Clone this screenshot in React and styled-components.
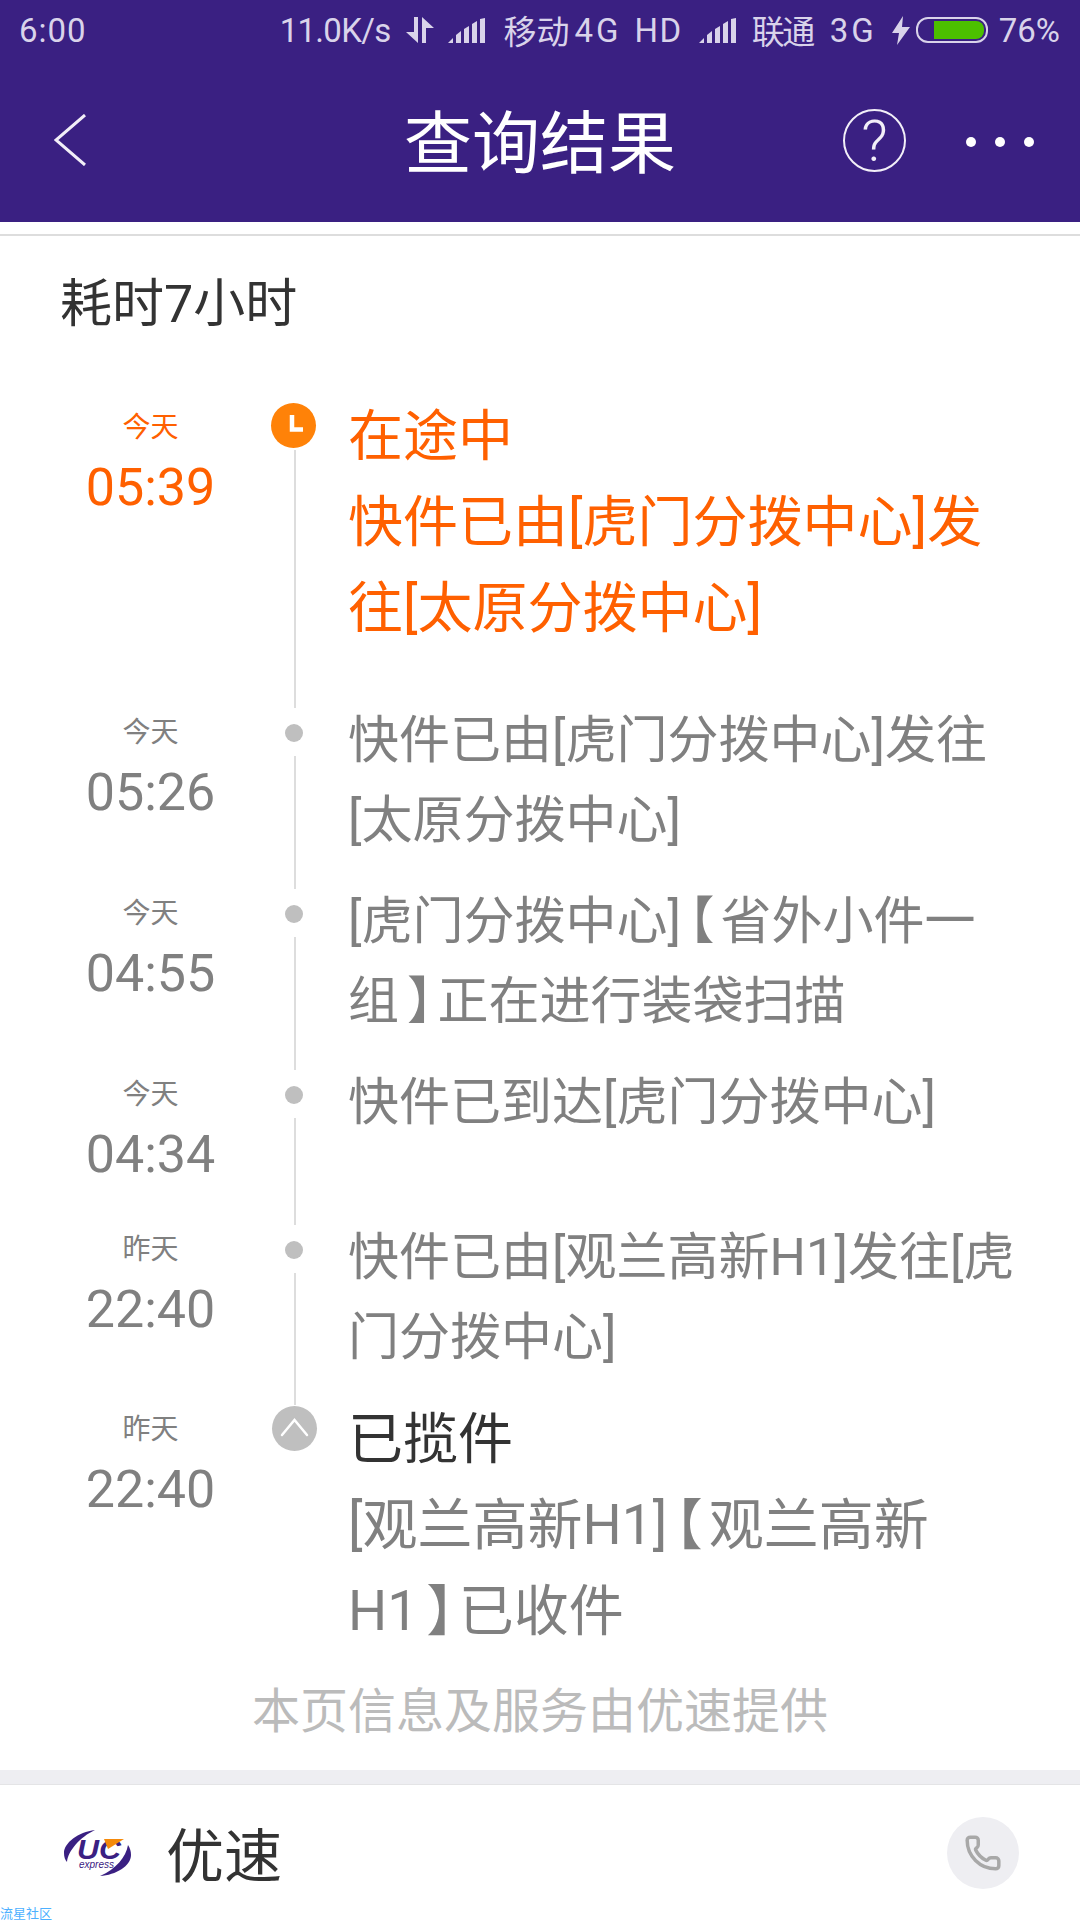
import React from 'react';
import styled, { createGlobalStyle } from 'styled-components';
import { Phone } from 'lucide-react';

const events = [
    { day: '今天', time: '05:39', kind: 'current', height: 305, lines: ['快件已由[虎门分拨中心]发', '往[太原分拨中心]'], title: '在途中' },
    { day: '今天', time: '05:26', height: 181, lines: ['快件已由[虎门分拨中心]发往', '[太原分拨中心]'] },
    { day: '今天', time: '04:55', height: 181, lines: ['[虎门分拨中心]【省外小件一', '组】正在进行装袋扫描'] },
    { day: '今天', time: '04:34', height: 155, lines: ['快件已到达[虎门分拨中心]'] },
    { day: '昨天', time: '22:40', height: 180, lines: ['快件已由[观兰高新H1]发往[虎', '门分拨中心]'] },
    { day: '昨天', time: '22:40', kind: 'first', height: 274, lines: ['[观兰高新H1]【观兰高新', 'H1】已收件'], title: '已揽件' },
];

// the full width brackets sit tighter on the phone than in Noto
const withBrackets = (line) =>
    line.split(/([【】])/).map((part, i) => {
        if (part === '【') return <OpenBracket key={i}>{part}</OpenBracket>;
        if (part === '】') return <CloseBracket key={i}>{part}</CloseBracket>;
        return part;
    });

const SignalIcon = () => (
    <svg width="37" height="25" viewBox="0 0 37 25" fill="#d9d3ea">
        <path d="M0 25 L5 20 V25 Z" />
        <path d="M8 25 V17 L13 13 V25 Z" />
        <path d="M16 25 V11 L21 8 V25 Z" />
        <path d="M24 25 V6 L29 3 V25 Z" />
        <path d="M32 25 V1 L37 0 V25 Z" />
    </svg>
);

const App = () => {
    return (
        <Page>
            <GlobalStyle />
            <Header>
                <StatusBar>
                    <StatusTime>6:00</StatusTime>
                    <StatusRight>
                        <StatusText $spacing={-0.7}>11.0K/s</StatusText>
                        <StatusIcon $gap={16}>
                            <svg width="28" height="26" viewBox="0 0 28 26" fill="#d9d3ea">
                                <path d="M8 0 H12 V26 L0 15 H8 Z" />
                                <path d="M16 26 H20 V11 H28 L16 0 Z" />
                            </svg>
                        </StatusIcon>
                        <StatusIcon $gap={14}>
                            <SignalIcon />
                        </StatusIcon>
                        <StatusText $gap={18}>移动</StatusText>
                        <StatusText $gap={5} $spacing={3}>4G</StatusText>
                        <StatusText $gap={13} $spacing={1.5}>HD</StatusText>
                        <StatusIcon $gap={16}>
                            <SignalIcon />
                        </StatusIcon>
                        <StatusText $gap={16} $spacing={-2.5}>联通</StatusText>
                        <StatusText $gap={17} $spacing={3}>3G</StatusText>
                        <StatusIcon $gap={15}>
                            <svg width="18" height="29" viewBox="0 0 18 29" fill="#d9d3ea">
                                <path d="M11 0 L0 17 H7 L5 29 L18 11 H10 Z" />
                            </svg>
                        </StatusIcon>
                        <BatteryShell>
                            <BatteryFill />
                        </BatteryShell>
                        <StatusText $gap={11}>76%</StatusText>
                    </StatusRight>
                </StatusBar>
                <NavBar>
                    <svg width="32" height="52" viewBox="0 0 32 52" fill="none" stroke="#f2eff8" strokeWidth="3">
                        <path d="M31 1 L2 26 L31 51" />
                    </svg>
                    <NavTitle>查询结果</NavTitle>
                    <HelpCircle>?</HelpCircle>
                    <MoreDots>
                        <MoreDot />
                        <MoreDot />
                        <MoreDot />
                    </MoreDots>
                </NavBar>
            </Header>
            <HeaderLine />
            <Summary>耗时7小时</Summary>
            <Timeline>
                {events.map((item, i) => (
                    <Row key={i} $height={item.height}>
                        <TimeCol>
                            <DayLabel $current={item.kind === 'current'}>{item.day}</DayLabel>
                            <TimeLabel $current={item.kind === 'current'}>{item.time}</TimeLabel>
                        </TimeCol>
                        <Axis>
                            {item.kind === 'current' && (
                                <BigDot $color="#ff8208">
                                    <svg width="45" height="45" viewBox="0 0 45 45" fill="none" stroke="white" strokeWidth="4.5">
                                        <path d="M21 12 V26.5 H32" />
                                    </svg>
                                </BigDot>
                            )}
                            {item.kind === 'first' && (
                                <BigDot $color="#bfbfbf" $flush>
                                    <svg width="45" height="45" viewBox="0 0 45 45" fill="none" stroke="white" strokeWidth="2.5" strokeLinecap="round">
                                        <path d="M10 29 L22.5 14 L35 29" />
                                    </svg>
                                </BigDot>
                            )}
                            {!item.kind && <SmallDot />}
                            {item.kind !== 'first' && <AxisLine $flush={item.kind === 'current'} />}
                        </Axis>
                        <Body $current={item.kind === 'current'} $tall={!!item.title}>
                            {item.title && <BodyTitle $current={item.kind === 'current'}>{item.title}</BodyTitle>}
                            {item.lines.map((line) => (
                                <div key={line}>{withBrackets(line)}</div>
                            ))}
                        </Body>
                    </Row>
                ))}
            </Timeline>
            <Provider>本页信息及服务由优速提供</Provider>
            <Band />
            <Company>
                <svg width="67" height="48" viewBox="0 0 67 48">
                    <path fill="#3a2082" d="M31 1 C14 3 0 14 0 24 C0 28 1 31 3 33 C4 22 16 8 31 1 Z" />
                    <path fill="#3a2082" d="M36 47 C52 46 67 37 67 26 C67 22 66 19 64 16 C62 28 52 40 36 47 Z" />
                    <text x="13" y="30" fontFamily="Liberation Sans" fontWeight="700" fontStyle="italic" fontSize="28" fill="#3a2082" textLength="44" lengthAdjust="spacingAndGlyphs">UC</text>
                    <path fill="#f58a0b" d="M40 10 H60 L44 20 Z" />
                    <text x="15" y="39" fontFamily="Liberation Sans" fontStyle="italic" fontSize="11" fill="#3a2082" textLength="35" lengthAdjust="spacingAndGlyphs">express</text>
                </svg>
                <CompanyName>优速</CompanyName>
                <PhoneButton>
                    <Phone size={38} color="#a8a8a8" strokeWidth={2.2} />
                </PhoneButton>
            </Company>
            <Watermark>流星社区</Watermark>
        </Page>
    );
};

export default App;

const GlobalStyle = createGlobalStyle`
    html, body {
        margin: 0;
        padding: 0;
        background: white;
    }
`

const Page = styled.div`
    width: 1080px;
    height: 1920px;
    overflow: hidden;
    display: flex;
    flex-direction: column;
    background-color: white;
    font-family: Roboto, "Noto Sans CJK SC", sans-serif;
`

const Header = styled.div`
    height: 222px;
    flex-shrink: 0;
    background-color: #3a2082;
    display: flex;
    flex-direction: column;
`

const StatusBar = styled.div`
    height: 60px;
    padding: 0 20px 0 19px;
    display: flex;
    align-items: center;
    justify-content: space-between;
`

const StatusTime = styled.div`
    font-size: 33px;
    letter-spacing: 1px;
    color: #d9d3ea;
`

const StatusRight = styled.div`
    display: flex;
    align-items: center;
`

const StatusText = styled.div`
    margin-left: ${(props) => props.$gap || 0}px;
    letter-spacing: ${(props) => props.$spacing || 0}px;
    font-size: 33px;
    color: #d9d3ea;
    white-space: nowrap;
`

const StatusIcon = styled.div`
    margin-left: ${(props) => props.$gap || 0}px;
    display: flex;
    align-items: center;
`

const BatteryShell = styled.div`
    width: 72px;
    height: 26px;
    margin-left: 6px;
    box-sizing: border-box;
    border: 2px solid #d9d3ea;
    border-radius: 12px;
    padding: 2px;
    display: flex;
    justify-content: flex-end;
`

const BatteryFill = styled.div`
    width: 50px;
    height: 100%;
    background-color: #4cc000;
    border-radius: 0 8px 8px 0;
`

const NavBar = styled.div`
    flex: 1;
    position: relative;
    display: flex;
    align-items: center;
    padding-left: 54px;
    padding-bottom: 2px;
`

const NavTitle = styled.div`
    position: absolute;
    left: 404px;
    top: 40px;
    font-size: 68px;
    line-height: 90px;
    font-weight: 400;
    color: white;
`

const HelpCircle = styled.div`
    position: absolute;
    left: 843px;
    top: 49px;
    width: 63px;
    height: 63px;
    box-sizing: border-box;
    border: 2.5px solid #f2eff8;
    border-radius: 50%;
    display: flex;
    align-items: center;
    justify-content: center;
    font-size: 58px;
    font-weight: 300;
    color: #f2eff8;
`

const MoreDots = styled.div`
    position: absolute;
    left: 966px;
    top: 77px;
    display: flex;
    gap: 19px;
`

const MoreDot = styled.div`
    width: 10px;
    height: 10px;
    border-radius: 50%;
    background-color: white;
`

const HeaderLine = styled.div`
    height: 2px;
    margin-top: 12px;
    flex-shrink: 0;
    background-color: #dddddd;
`

const Summary = styled.div`
    height: 167px;
    flex-shrink: 0;
    box-sizing: border-box;
    padding: 34px 0 0 60px;
    font-size: 52px;
    line-height: 70px;
    color: #333333;
`

const Timeline = styled.div`
    display: flex;
    flex-direction: column;
    flex-shrink: 0;
`

const Row = styled.div`
    height: ${(props) => props.$height}px;
    display: flex;
`

const TimeCol = styled.div`
    width: 225px;
    margin: 0 8px 0 38px;
    padding-top: 9px;
    display: flex;
    flex-direction: column;
    align-items: center;
    flex-shrink: 0;
`

const DayLabel = styled.div`
    font-size: 28px;
    line-height: 32px;
    color: ${(props) => (props.$current ? '#ff6000' : '#808080')};
`

const TimeLabel = styled.div`
    margin-top: 14px;
    font-size: 52px;
    line-height: 60px;
    color: ${(props) => (props.$current ? '#ff6000' : '#808080')};
`

const Axis = styled.div`
    width: 46px;
    flex-shrink: 0;
    display: flex;
    flex-direction: column;
    align-items: center;
`

const BigDot = styled.div`
    width: 45px;
    height: 45px;
    margin-top: ${(props) => (props.$flush ? '1px' : '0')};
    margin-right: ${(props) => (props.$flush ? '0' : '2px')};
    flex-shrink: 0;
    border-radius: 50%;
    background-color: ${(props) => props.$color};
    line-height: 0;
`

const SmallDot = styled.div`
    width: 18px;
    height: 18px;
    margin-top: 16px;
    flex-shrink: 0;
    border-radius: 50%;
    background-color: #bfbfbf;
`

const AxisLine = styled.div`
    width: 2px;
    flex: 1;
    margin-top: ${(props) => (props.$flush ? '2px' : '14px')};
    margin-left: 2px;
    background-color: #dddddd;
`

const Body = styled.div`
    margin-left: 31px;
    margin-top: ${(props) => (props.$current ? '-10px' : props.$tall ? '-9px' : '-7px')};
    font-size: ${(props) => (props.$tall ? '55px' : '51px')};
    line-height: ${(props) => (props.$tall ? '86px' : '80px')};
    color: ${(props) => (props.$current ? '#ff6000' : '#808080')};
    white-space: nowrap;
`

const BodyTitle = styled.div`
    color: ${(props) => (props.$current ? '#ff6000' : '#333333')};
`

const OpenBracket = styled.span`
    font-feature-settings: "halt";
    margin-left: 8px;
    margin-right: 6px;
`

const CloseBracket = styled.span`
    font-feature-settings: "halt";
    margin-left: 8px;
    margin-right: 5px;
`

const Provider = styled.div`
    height: 91px;
    flex-shrink: 0;
    box-sizing: border-box;
    padding-bottom: 35px;
    display: flex;
    align-items: center;
    justify-content: center;
    font-size: 48px;
    color: #bbbbbb;
`

const Band = styled.div`
    height: 14px;
    flex-shrink: 0;
    background-color: #eeeef2;
    border-bottom: 1px solid #e4e4e6;
`

const Company = styled.div`
    height: 123px;
    flex-shrink: 0;
    box-sizing: border-box;
    display: flex;
    align-items: center;
    padding: 12px 61px 0 64px;
`

const CompanyName = styled.div`
    margin-left: 35px;
    margin-bottom: 2px;
    flex: 1;
    font-size: 58px;
    color: #333333;
`

const PhoneButton = styled.div`
    width: 72px;
    height: 72px;
    border-radius: 50%;
    background-color: #eeeef2;
    display: flex;
    align-items: center;
    justify-content: center;
`

const Watermark = styled.div`
    font-size: 13px;
    line-height: 12px;
    color: #4db0ff;
    white-space: nowrap;
`
